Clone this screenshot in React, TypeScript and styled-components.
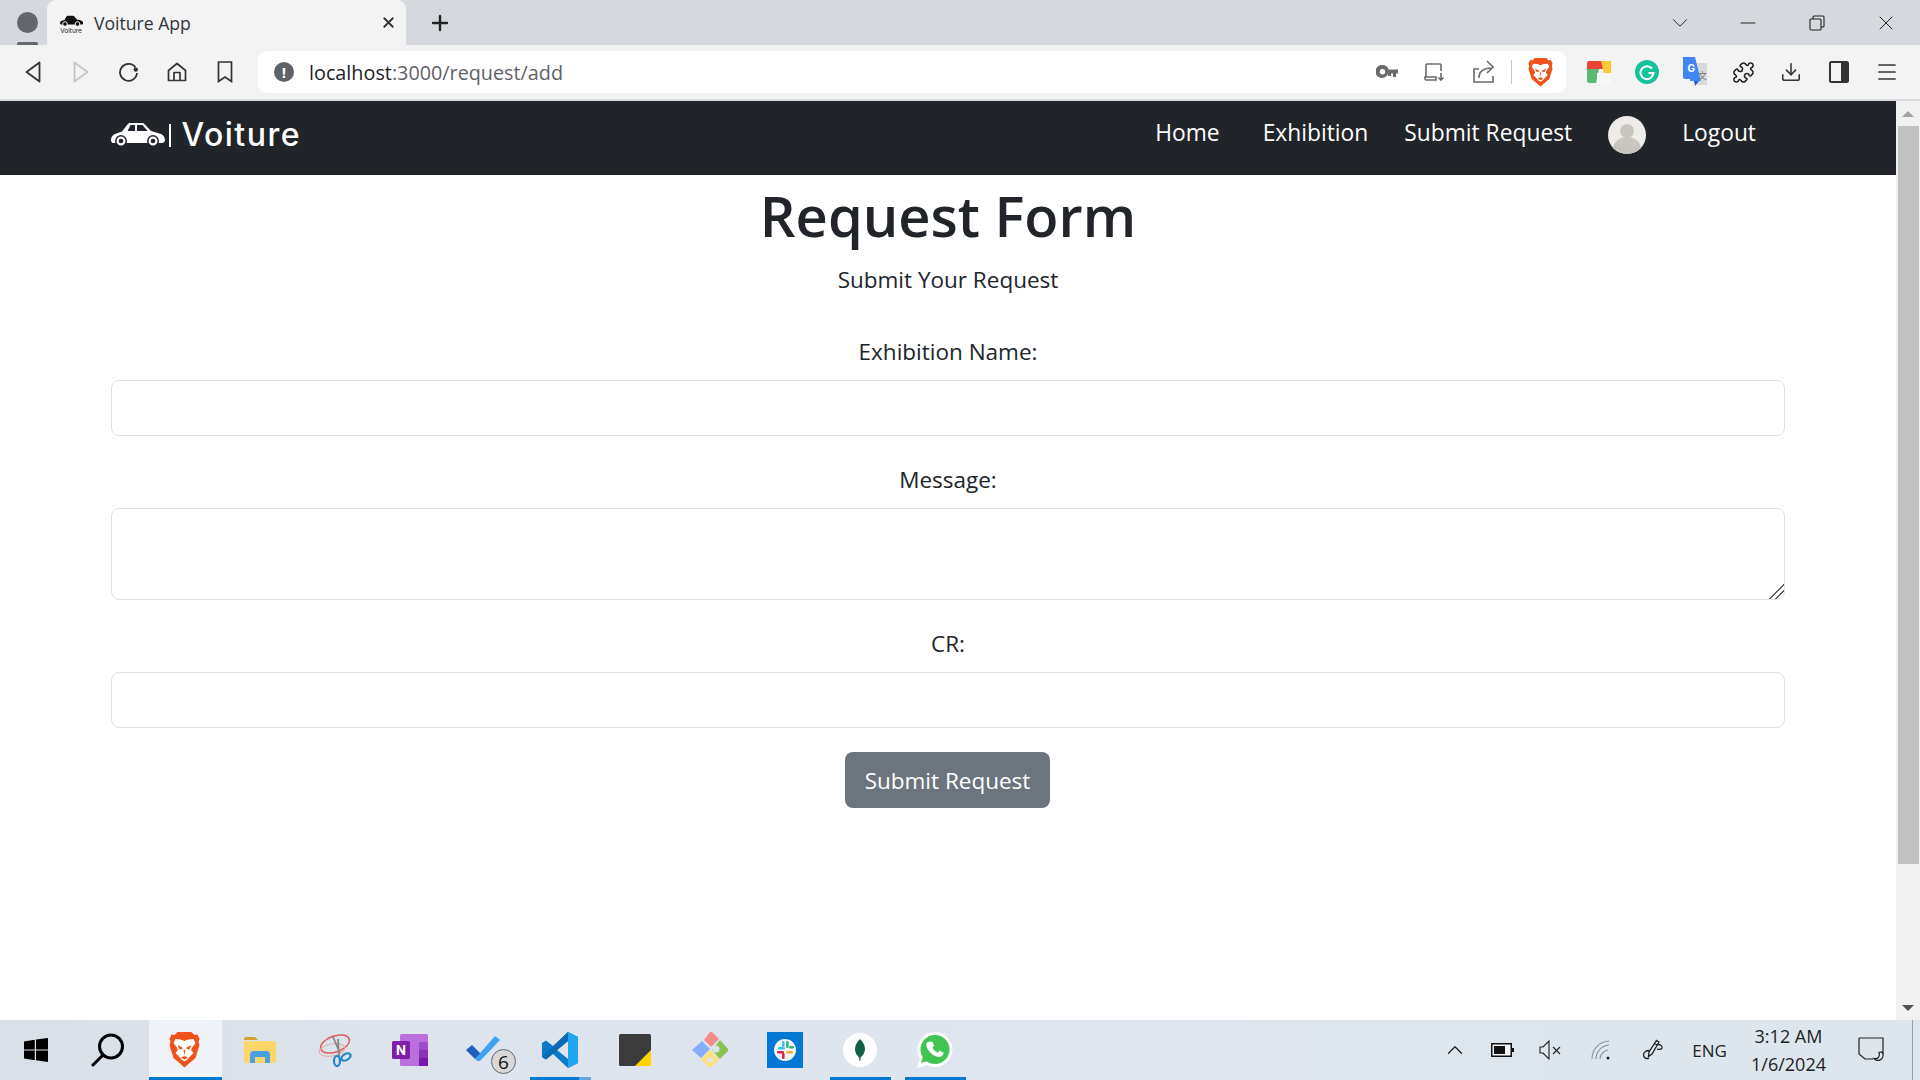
import React from "react";
import styled, { createGlobalStyle } from "styled-components";
import { X, Plus, Minus, ChevronDown, Download, Menu, Puzzle, ChevronUp } from "lucide-react";

const Global = createGlobalStyle`
  html, body { margin: 0; padding: 0; height: 100%; overflow: hidden; background: #fff; }
  #root { height: 100%; }
  * { box-sizing: border-box; }
`;
const UI = `"Open Sans", "Noto Sans", sans-serif`;

const Screen = styled.div`
  width: 1920px; height: 1080px; display: flex; flex-direction: column; overflow: hidden;
  font-family: ${UI}; color: #212529;
`;
const TabStrip = styled.div`
  height: 45px; flex: none; background: #d5d9dd; display: flex; align-items: flex-end;
`;
const ProfileSlot = styled.div`
  width: 47px; height: 45px; flex: none; display: flex; flex-direction: column; align-items: center; padding: 12px 0 0 7px; justify-content: space-between;
`;
const ProfileDot = styled.div`width: 21px; height: 21px; border-radius: 50%; background: #63666b;`;
const ProfileStub = styled.div`width: 21px; height: 3px; background: #63666b; border-radius: 2px 2px 0 0;`;
const Tab = styled.div`
  width: 359px; height: 45px; background: #f3f3f3; border-radius: 9px 9px 0 0; display: flex; align-items: center; padding: 0 9px 0 12px;
`;
const TabTitle = styled.span`
  margin-left: 11px; font-size: 17.6px; color: #303438; flex: 1; white-space: nowrap;
`;
const NewTab = styled.div`margin-left: 20px; height: 45px; width: 28px; display: flex; align-items: center; justify-content: center; color: #222;`;
const WindowControls = styled.div`margin-left: auto; display: flex; height: 45px; align-items: center;`;
const WinButton = styled.div<{ $w?: number }>`
  width: ${p => p.$w ?? 69}px; height: 45px; display: flex; align-items: center; justify-content: center; color: #222;
`;
const Toolbar = styled.div`
  height: 54px; flex: none; background: #f3f3f3; display: flex; align-items: center; padding-left: 9px;
`;
const ToolIcon = styled.div<{ $w?: number }>`
  width: ${p => p.$w ?? 48}px; height: 42px; flex: none; display: flex; align-items: center; justify-content: center; color: #333;
`;
const Omnibox = styled.div`
  width: 1308px; height: 42px; margin: 0 9px 0 9px; background: #fff; border-radius: 9px; display: flex; align-items: center; padding: 0 3px 0 16px; flex: none;
`;
const InfoDot = styled.div`
  width: 20px; height: 20px; border-radius: 50%; background: #5f6368; color: #fff; font-size: 15px; font-weight: 700; display: flex; align-items: center; justify-content: center; flex: none;
`;
const Url = styled.div`margin-left: 15px; font-size: 19.8px; color: #5f6368; white-space: nowrap; flex: 1; b { font-weight: 400; color: #202124; }`;
const OmniSep = styled.div`width: 1px; height: 24px; background: #c8c8c8; margin: 0 5px 0 5px; flex: none;`;
const ChromeRule = styled.div`height: 2px; flex: none; background: #d8dbdf;`;

const Viewport = styled.div`flex: 1; min-height: 0; display: flex;`;
const Page = styled.div`flex: 1; min-width: 0; display: flex; flex-direction: column; background: #fff;`;
const Navbar = styled.nav`
  height: 74px; flex: none; background: #212529; padding: 14px 140px 0 111px; display: flex; align-items: flex-start; color: #fff;
`;
const Brand = styled.div`display: flex; align-items: center; height: 40px;`;
const BrandRule = styled.div`width: 1.5px; height: 23px; background: #fff; margin: 0 11px 0 4px;`;
const BrandName = styled.span`font-family: Inter, sans-serif; font-size: 32px; font-weight: 500; color: #fff; letter-spacing: 1.5px; line-height: 40px;`;
const NavLinks = styled.div`margin-left: auto; display: flex; align-items: flex-start; gap: 36px;`;
const NavLink = styled.a<{ $first?: boolean }>`
  font-size: 22.8px; line-height: 36px; color: #fff; white-space: nowrap; margin-right: ${p => (p.$first ? 7 : 0)}px;
`;
const Avatar = styled.div`
  width: 38px; height: 38px; border-radius: 50%; background: #eeece8; overflow: hidden; margin-top: 1px; display: flex;
`;
const Content = styled.main`
  flex: 1; padding: 0 111px; display: flex; flex-direction: column; align-items: center;
`;
const Title = styled.h1`
  margin: 0; font-size: 56px; font-weight: 600; line-height: 80px; color: #212529; white-space: nowrap;
`;
const Lead = styled.p`margin: 0; font-size: 22.5px; line-height: 36px; padding-top: 7px; color: #212529;`;
const Field = styled.div<{ $top: number }>`
  width: 100%; margin-top: ${p => p.$top}px; display: flex; flex-direction: column; align-items: center;
`;
const Label = styled.label`font-size: 22.5px; line-height: 36px; margin-bottom: 10px; color: #212529;`;
const Input = styled.input`
  width: 100%; height: 56px; border: 1.5px solid #dee2e6; border-radius: 8px; background: #fff; display: block; outline: none; font: inherit;
`;
const TextArea = styled.textarea`
  width: 100%; height: 92px; border: 1.5px solid #dee2e6; border-radius: 8px; background: #fff; display: block; outline: none; font: inherit; resize: vertical;
  &::-webkit-resizer {
    background: linear-gradient(135deg, transparent 48%, #5c5c5c 48%, #5c5c5c 56%, transparent 56%, transparent 68%, #5c5c5c 68%, #5c5c5c 76%, transparent 76%);
  }
`;
const Submit = styled.button`
  margin: 24px 1px 0 0; width: 205px; height: 56px; border: 0; border-radius: 8px; background: #6c757d; color: #fff; font-family: ${UI}; font-size: 22.5px; padding: 0;
`;
const Scrollbar = styled.div`
  width: 24px; flex: none; background: #f1f1f1; display: flex; flex-direction: column; align-items: center;
`;
const ScrollArrow = styled.div<{ $down?: boolean }>`
  height: 25px; flex: none; width: 100%; display: flex; align-items: center; justify-content: center;
  &::before { content: ""; border-left: 6px solid transparent; border-right: 6px solid transparent;
    ${p => (p.$down ? "border-top: 6px solid #505050;" : "border-bottom: 6px solid #a3a3a3;")} }
`;
const ScrollThumb = styled.div`width: 21px; height: 738px; background: #c1c1c1; flex: none;`;
const ScrollTrack = styled.div`flex: 1;`;

const Taskbar = styled.footer`
  height: 60px; flex: none; background: linear-gradient(90deg, #d9dfe6 0%, #dde4ed 20%, #dfe6ef 60%, #dce6ec 100%); display: flex; align-items: stretch; color: #1a1a1a;
`;
const TaskCell = styled.div<{ $w?: number; $active?: boolean; $running?: boolean; $stacked?: boolean; $shift?: number; $lift?: number }>`
  width: ${p => p.$w ?? 75}px; flex: none; position: relative; display: flex; align-items: center; justify-content: center;
  padding-right: ${p => 2 + (p.$shift ?? 0)}px; padding-bottom: ${p => p.$lift ?? 0}px;
  ${p => p.$active ? "background: linear-gradient(#eff3f7,#eff3f7) 1px 0/73px 100% no-repeat;" : ""}
  &::after { content: ""; position: absolute; bottom: 0; height: 3px;
    background: ${p => (p.$stacked ? "linear-gradient(90deg, #0078d4 80%, #62a8e0 80%)" : "#0078d4")};
    left: ${p => (p.$active ? 1 : 7)}px; right: ${p => (p.$active ? 1 : 7)}px; display: ${p => (p.$active || p.$running ? "block" : "none")}; }
`;
const Badge = styled.span`
  position: absolute; left: 43px; top: 29px; width: 25px; height: 25px; border-radius: 50%; background: #d8d8d8; border: 1px solid #666; color: #111;
  font-size: 19px; display: flex; align-items: center; justify-content: center;
`;
const Tray = styled.div`margin-left: auto; display: flex; align-items: center; height: 100%;`;
const TrayIcon = styled.div<{ $w: number }>`width: ${p => p.$w}px; flex: none; display: flex; align-items: center; justify-content: center; color: #222;`;
const TrayText = styled.span`font-size: 17px; color: #222; width: 50px; margin-left: 8px; text-align: center; white-space: nowrap;`;
const Clock = styled.div`width: 88px; margin-left: 10px; display: flex; flex-direction: column; align-items: center; font-size: 18px; line-height: 28px; color: #222; white-space: nowrap;`;
const Notify = styled.div`width: 40px; margin-left: 18px; display: flex; align-items: center; justify-content: center;`;
const DesktopEdge = styled.div`width: 1.5px; margin: 0 7px 0 21px; background: #9aa0a6; align-self: stretch; flex: none;`;

const lion = (
  <>
    <path fill="#f1511b" d="M8 0H22L25 3L28 2.500L30 7L29 10L30 13L26 26L20 31L15 35.500L10 31L4 26L0 13L1 10L0 7L2 2.500L5 3Z" />
    <path fill="#fff" d="M6 7L11 7.500L15 9L19 7.500L24 7L26 11L23 15L21.500 18L24 21L20 25L18 27.500L15 29.500L12 27.500L10 25L6 21L8.500 18L7 15L4 11Z" />
    <path fill="#f1511b" d="M8 13L13 15.500L13 17L10 17.500ZM22 13L17 15.500L17 17L20 17.500ZM11.500 25.500L15 24L18.500 25.500L15 27.500Z" />
    <path fill="#f1511b" d="M14 18L15 23.500L16 18Z" />
  </>
);

const Car = () => (
  <svg width="54" height="24" viewBox="0 0 54 24">
    <path fill="#fff" fillRule="evenodd" d="M0 17C0 14 1.500 12 4 11L11 8.500L16.500 1.500C17 .6 18 0 19 0H31C32 0 33 .5 33.500 1L40 8L50 11C52.500 12 54 14 54 18L52 20H2C.8 20 0 18.500 0 17ZM19.500 2L16.500 8H24V2ZM26 2V8H36.500L31.500 2Z" />
    <circle cx="10" cy="18" r="5.200" fill="#fff" stroke="#212529" strokeWidth="1.500" />
    <circle cx="10" cy="18" r="2.300" fill="#212529" />
    <circle cx="42" cy="18" r="5.200" fill="#fff" stroke="#212529" strokeWidth="1.500" />
    <circle cx="42" cy="18" r="2.300" fill="#212529" />
  </svg>
);

export default function App() {
  return (
    <Screen>
      <Global />
      <TabStrip>
        <ProfileSlot><ProfileDot /><ProfileStub /></ProfileSlot>
        <Tab>
          <svg width="24" height="20" viewBox="0 0 24 20">
            <path d="M1 9.500c.2-1.400 1.600-2.200 4.500-2.600L7.500 3.400c.3-.5.700-.7 1.300-.7h5c.6 0 1 .2 1.400.6l3 3.400c3.300.4 5 1 5.800 2.200.1 1 0 2-.3 2.600h-22c-.5-.4-.7-1-.7-2z" fill="#111" />
            <circle cx="6" cy="11" r="2.300" fill="#111" stroke="#f3f3f3" /><circle cx="18.500" cy="11" r="2.300" fill="#111" stroke="#f3f3f3" />
            <text x="12" y="19.500" fontSize="6.500" textAnchor="middle" fill="#222" fontFamily="Inter, sans-serif">Voiture</text>
          </svg>
          <TabTitle>Voiture App</TabTitle>
          <X size={17} strokeWidth={2.6} color="#333" />
        </Tab>
        <NewTab><Plus size={24} strokeWidth={2.4} /></NewTab>
        <WindowControls>
          <WinButton $w={40}><ChevronDown size={26} strokeWidth={.9} /></WinButton>
          <WinButton $w={13} />
          <WinButton><Minus size={24} strokeWidth={1} /></WinButton>
          <WinButton>
            <svg width="16" height="16" viewBox="0 0 16 16" fill="none" stroke="#222" strokeWidth="1.100"><rect x="1" y="4" width="11" height="11" rx="1" /><path d="M4 4V2a1 1 0 0 1 1-1h9a1 1 0 0 1 1 1v9a1 1 0 0 1-1 1h-2" /></svg>
          </WinButton>
          <WinButton><X size={24} strokeWidth={1} /></WinButton>
        </WindowControls>
      </TabStrip>
      <Toolbar>
        <ToolIcon $w={47}>
          <svg width="16" height="22" viewBox="0 0 16 22" fill="none" stroke="#333" strokeWidth="1.800" strokeLinejoin="round"><path d="M14.500 1.500v19L1.500 11z" /></svg>
        </ToolIcon>
        <ToolIcon $w={49}>
          <svg width="16" height="22" viewBox="0 0 16 22" fill="none" stroke="#c4c4c4" strokeWidth="1.800" strokeLinejoin="round"><path d="M1.500 1.500v19l13-9.500z" /></svg>
        </ToolIcon>
        <ToolIcon>
          <svg width="20" height="20" viewBox="0 0 20 20" fill="none" stroke="#333" strokeWidth="1.800"><path d="M16.500 5.500A8.500 8.500 0 1 0 18 11" /><circle cx="16.800" cy="7.600" r="2.200" fill="#333" stroke="none" /></svg>
        </ToolIcon>
        <ToolIcon>
          <svg width="20" height="20" viewBox="0 0 20 20" fill="none" stroke="#333" strokeWidth="1.700" strokeLinejoin="round"><path d="M1.500 8.500 10 1.500l8.500 7v10h-17zM7 18.500v-8h6v8" /></svg>
        </ToolIcon>
        <ToolIcon>
          <svg width="16" height="22" viewBox="0 0 16 22" fill="none" stroke="#333" strokeWidth="1.700"><path d="M1.500 1h13v19.500L8 16l-6.500 4.500z" /></svg>
        </ToolIcon>
        <Omnibox>
          <InfoDot>!</InfoDot>
          <Url><b>localhost</b>:3000/request/add</Url>
          <ToolIcon $w={48}>
            <svg width="22" height="14" viewBox="0 0 22 14" fill="#6a6a6a"><path fillRule="evenodd" d="M6.500 0a6.500 6.500 0 0 1 6.200 4.500H22v4h-2V12h-3V8.500h-2V11h-3V8.800A6.500 6.500 0 1 1 6.500 0zm0 4a2.700 2.700 0 1 0 0 5.400 2.700 2.700 0 0 0 0-5.400z" /></svg>
          </ToolIcon>
          <ToolIcon $w={48}>
            <svg width="22" height="20" viewBox="0 0 22 20" fill="none" stroke="#6a6a6a" strokeWidth="1.600"><path d="M2 15V3a1 1 0 0 1 1-1h13a1 1 0 0 1 1 1v6M1 15h11v3H2a1 1 0 0 1-1-1zM17 11v7M14.500 15.500l2.500 2.500 2.500-2.500" /></svg>
          </ToolIcon>
          <ToolIcon $w={47}>
            <svg width="22" height="24" viewBox="0 0 22 24" fill="none" stroke="#6a6a6a" strokeWidth="1.600"><path d="M7 10H2v13h19v-6M7 19c0-6 4-10 13-10M15 2l6 6-6 6" transform="translate(0 -1)" /></svg>
          </ToolIcon>
          <OmniSep />
          <ToolIcon $w={46}><svg width="25" height="29" viewBox="0 0 30 36">{lion}</svg></ToolIcon>
        </Omnibox>
        <ToolIcon>
          <svg width="24" height="22" viewBox="0 0 24 22"><path d="M2 0h20a2 2 0 0 1 2 2v6H0V2a2 2 0 0 1 2-2z" fill="#ea4335" /><path d="M0 8h12l-3 14H2a2 2 0 0 1-2-2z" fill="#5bb974" /><path d="M14 0h8a2 2 0 0 1 2 2v18a2 2 0 0 1-2 2h-3z" fill="#fcc934" /><rect x="10" y="12" width="14" height="10" fill="#f7f7f7" /></svg>
        </ToolIcon>
        <ToolIcon>
          <svg width="24" height="24" viewBox="0 0 24 24"><circle cx="12" cy="12" r="12" fill="#15c39a" /><path d="M17 8.500A6.500 6.500 0 1 0 18.500 13h-5M18.500 13l-1.500 3.500" fill="none" stroke="#fff" strokeWidth="2" /></svg>
        </ToolIcon>
        <ToolIcon>
          <svg width="24" height="30" viewBox="0 0 24 30"><path d="M10 6h14v22H14z" fill="#d9d9d9" /><path d="M0 0h12l6 24H7v-2H2a2 2 0 0 1-2-2z" fill="#4285f4" /><path d="M11 24h5l-4 5z" fill="#2a56c6" /><text x="4.500" y="15" fontSize="10" fontWeight="700" fill="#fff" fontFamily="Inter, sans-serif">G</text><text x="15" y="22" fontSize="9" fill="#777" fontFamily="Noto Sans CJK SC, sans-serif">文</text></svg>
        </ToolIcon>
        <ToolIcon><Puzzle size={23} strokeWidth={1.600} color="#222" /></ToolIcon>
        <ToolIcon><Download size={22} strokeWidth={1.700} /></ToolIcon>
        <ToolIcon>
          <svg width="20" height="22" viewBox="0 0 20 22"><rect x="1" y="1" width="18" height="20" rx="1.500" fill="none" stroke="#333" strokeWidth="2" /><rect x="12" y="1" width="7" height="20" fill="#333" /></svg>
        </ToolIcon>
        <ToolIcon><Menu size={24} strokeWidth={1.700} /></ToolIcon>
      </Toolbar>
      <ChromeRule />
      <Viewport>
        <Page>
          <Navbar>
            <Brand>
              <Car />
              <BrandRule />
              <BrandName>Voiture</BrandName>
            </Brand>
            <NavLinks>
              <NavLink $first>Home</NavLink>
              <NavLink>Exhibition</NavLink>
              <NavLink>Submit Request</NavLink>
              <Avatar>
                <svg width="38" height="38" viewBox="0 0 38 38"><circle cx="19" cy="15" r="7" fill="#c9c6c0" /><ellipse cx="19" cy="33" rx="14" ry="12" fill="#c9c6c0" /></svg>
              </Avatar>
              <NavLink>Logout</NavLink>
            </NavLinks>
          </Navbar>
          <Content>
            <Title>Request Form</Title>
            <Lead>Submit Your Request</Lead>
            <Field $top={36}>
              <Label>Exhibition Name:</Label>
              <Input />
            </Field>
            <Field $top={26}>
              <Label>Message:</Label>
              <TextArea />
            </Field>
            <Field $top={26}>
              <Label>CR:</Label>
              <Input />
            </Field>
            <Submit>Submit Request</Submit>
          </Content>
        </Page>
        <Scrollbar>
          <ScrollArrow />
          <ScrollThumb />
          <ScrollTrack />
          <ScrollArrow $down />
        </Scrollbar>
      </Viewport>
      <Taskbar>
        <TaskCell $w={73}>
          <svg width="24" height="24" viewBox="0 0 24 24" fill="#000"><path d="M0 3.400 10.800 1.800v9.600H0zM12 1.600 24 0v11.400H12zM0 12.600h10.800v9.600L0 20.600zM12 12.600h12V24l-12-1.700z" /></svg>
        </TaskCell>
        <TaskCell $shift={3}>
          <svg width="34" height="34" viewBox="0 0 34 34" fill="none" stroke="#000" strokeWidth="3" strokeLinecap="round"><circle cx="20" cy="13.500" r="11.500" /><path d="M12 22 2 32" /></svg>
        </TaskCell>
        <TaskCell $active><svg width="31" height="36" viewBox="0 0 30 36">{lion}</svg></TaskCell>
        <TaskCell>
          <svg width="32" height="26" viewBox="0 0 32 26"><path d="M0 2a2 2 0 0 1 2-2h9l3 3h-14z" fill="#d3a12c" /><path d="M0 4h30a2 2 0 0 1 2 2v18a2 2 0 0 1-2 2H2a2 2 0 0 1-2-2z" fill="#fcd669" /><path d="M6 26v-8a4 4 0 0 1 4-4h12a4 4 0 0 1 4 4v8h-5v-6H11v6z" fill="#4aa0e6" /></svg>
        </TaskCell>
        <TaskCell>
          <svg width="34" height="34" viewBox="0 0 34 34" fill="none"><ellipse cx="17" cy="11" rx="15" ry="8" transform="rotate(-20 17 11)" stroke="#e35a5a" strokeWidth="1.500" /><ellipse cx="14" cy="17" rx="13" ry="6" transform="rotate(-10 14 17)" stroke="#e9a8a8" strokeWidth="1" /><path d="M15 4l7 16M21 24 20 6" stroke="#888" strokeWidth="1.800" /><ellipse cx="19" cy="28" rx="3" ry="5" stroke="#1b87c9" strokeWidth="2.200" /><ellipse cx="28" cy="24" rx="3" ry="5" transform="rotate(60 28 24)" stroke="#1b87c9" strokeWidth="2.200" /></svg>
        </TaskCell>
        <TaskCell>
          <svg width="36" height="33" viewBox="0 0 36 33"><rect x="8" y="0" width="28" height="32" rx="1.500" fill="#ba6fdd" /><rect x="27" y="8" width="9" height="8" fill="#a24bc9" /><rect x="27" y="16" width="9" height="8" fill="#8f33b5" /><rect x="27" y="24" width="9" height="8" fill="#7719aa" /><rect x="0" y="7" width="18" height="18" rx="1.500" fill="#7d1fa8" /><text x="9" y="21" fontSize="13" fontWeight="700" textAnchor="middle" fill="#fff" fontFamily="Inter, sans-serif">N</text></svg>
        </TaskCell>
        <TaskCell $shift={4} $lift={4}>
          <svg width="34" height="28" viewBox="0 0 34 28"><path d="M0 16l6-5 9 9-6 5z" fill="#1f5fbf" /><path d="M9 25 29 2l5 4-19 20c-2 2-4 1-6-1z" fill="#3ea2ee" /></svg>
          <Badge>6</Badge>
        </TaskCell>
        <TaskCell $running $stacked>
          <svg width="36" height="36" viewBox="0 0 36 36"><path d="M26 0l10 5v26l-10 5-15-14-7 5.500L0 25V11l4-2.500L11 14z" fill="#0b7ac8" /><path d="M26 9 15 18l11 9z" fill="#dde4ec" /><path d="M26 0l10 5v26l-10 5z" fill="#22a5f1" /><path d="M0 25 26 0v9L4 27.500z" fill="#0a6cb5" /></svg>
        </TaskCell>
        <TaskCell>
          <svg width="32" height="32" viewBox="0 0 32 32"><rect width="32" height="32" rx="1.500" fill="#3b3b3b" /><path d="M32 16v16H16z" fill="#ffd400" /></svg>
        </TaskCell>
        <TaskCell>
          <svg width="36" height="36" viewBox="0 0 36 36"><path d="M12 8 18 0a2 2 0 0 1 2 0l7 7-8 8z" fill="#f48a8a" /><path d="M0 18 10 9l8 8-9 9z" fill="#82aefb" /><path d="M28 8l8 9a2 2 0 0 1 0 2l-8 8-8-9z" fill="#8cc24f" /><path d="M9 27l9-9 9 10-9 8z" fill="#fde27a" /><circle cx="24" cy="17" r="3.500" fill="#dde4ec" /><circle cx="18" cy="28" r="3" fill="#dde4ec" /></svg>
        </TaskCell>
        <TaskCell>
          <svg width="36" height="36" viewBox="0 0 36 36"><rect width="36" height="36" fill="#0078d4" /><circle cx="18" cy="18" r="11" fill="#f5f7f8" /><rect x="11" y="15" width="7" height="2.600" rx="1.300" fill="#36c5f0" /><rect x="15" y="9" width="2.600" height="6" rx="1.300" fill="#36c5f0" /><rect x="19" y="9" width="2.600" height="7" rx="1.300" fill="#2eb67d" /><rect x="22" y="14" width="5" height="2.600" rx="1.300" fill="#2eb67d" /><rect x="19" y="19" width="7" height="2.600" rx="1.300" fill="#ecb22e" /><rect x="10" y="19" width="7" height="2.600" rx="1.300" fill="#e01e5a" /><rect x="15" y="21" width="2.600" height="6" rx="1.300" fill="#e01e5a" /></svg>
        </TaskCell>
        <TaskCell $running>
          <svg width="34" height="34" viewBox="0 0 34 34"><circle cx="17" cy="17" r="17" fill="#fff" /><path d="M17 6c3 3 5 6 5 10s-3 7-4.300 8.500l-.4 3.500h-.8l-.4-3.500C14.500 23 12 20 12 16s2-7 5-10z" fill="#116149" /></svg>
        </TaskCell>
        <TaskCell $running>
          <svg width="36" height="36" viewBox="0 0 36 36"><path d="M18 0a17.500 17.500 0 0 1 0 35c-3 0-5.500-.7-8-2L0 36l3-9.500A17.500 17.500 0 0 1 18 0z" fill="#fff" /><circle cx="18" cy="17.500" r="14.500" fill="#41c452" /><path d="M6 24.500 4 31l7-2z" fill="#41c452" /><path d="M13.500 9.500l2 .2 1.600 4-1.500 2c1 2 2.500 3.500 5 5l2-1.900 4 2c-.1 2-1.500 4-4 4.200-6 0-13-6.500-13.300-12.500 0-1.800 1.500-3 4.200-3z" fill="#fff" /></svg>
        </TaskCell>
        <Tray>
          <TrayIcon $w={48}><ChevronUp size={26} strokeWidth={1.200} /></TrayIcon>
          <TrayIcon $w={48}>
            <svg width="23" height="14" viewBox="0 0 23 14"><rect x=".75" y=".75" width="19.500" height="12.500" fill="#f4f6f8" stroke="#111" strokeWidth="1.500" /><rect x="3" y="3" width="11" height="8" fill="#111" /><rect x="21" y="5" width="2" height="4" fill="#111" /></svg>
          </TrayIcon>
          <TrayIcon $w={46}>
            <svg width="22" height="20" viewBox="0 0 22 20" fill="none" stroke="#222" strokeWidth="1.100"><path d="M1 7v6h3l6 6V1L4 7zM14 7l7 7M21 7l-7 7" /></svg>
          </TrayIcon>
          <TrayIcon $w={56}>
            <svg width="20" height="20" viewBox="0 0 20 20" fill="none" stroke="#8a8f94" strokeWidth="1.100"><path d="M1 19C1 9 8 2 18 1M5 19c0-7 5-13 13-14M9 19c0-4 3-8 8-9" /><circle cx="17" cy="18" r="1.500" fill="#222" stroke="none" /></svg>
          </TrayIcon>
          <TrayIcon $w={48}>
            <svg width="22" height="22" viewBox="0 0 22 22" fill="none" stroke="#222" strokeWidth="1.300" strokeLinecap="round"><path d="M14.500 1.500 17 3 10 15l-3.500 2.500L7 13zM12.500 4.500l2.800 1.600M16 5.500c3 0 4.500 1.800 4 3.500-.4 1.200-2 1.700-4.500 1.200M7 11.500c-3 0-5.500 2-5.500 4.500S4 20 6.500 19.500" /></svg>
          </TrayIcon>
          <TrayText>ENG</TrayText>
          <Clock><span>3:12 AM</span><span>1/6/2024</span></Clock>
          <Notify>
            <svg width="26" height="26" viewBox="0 0 26 26" fill="none" stroke="#222" strokeWidth="1.200"><path d="M1 1h24v16M1 1v16l6 5h8" /><path d="M24 15a5 5 0 0 1-8 6.500c4 1 6.500-2 5-6z" /></svg>
          </Notify>
          <DesktopEdge />
        </Tray>
      </Taskbar>
    </Screen>
  );
}
